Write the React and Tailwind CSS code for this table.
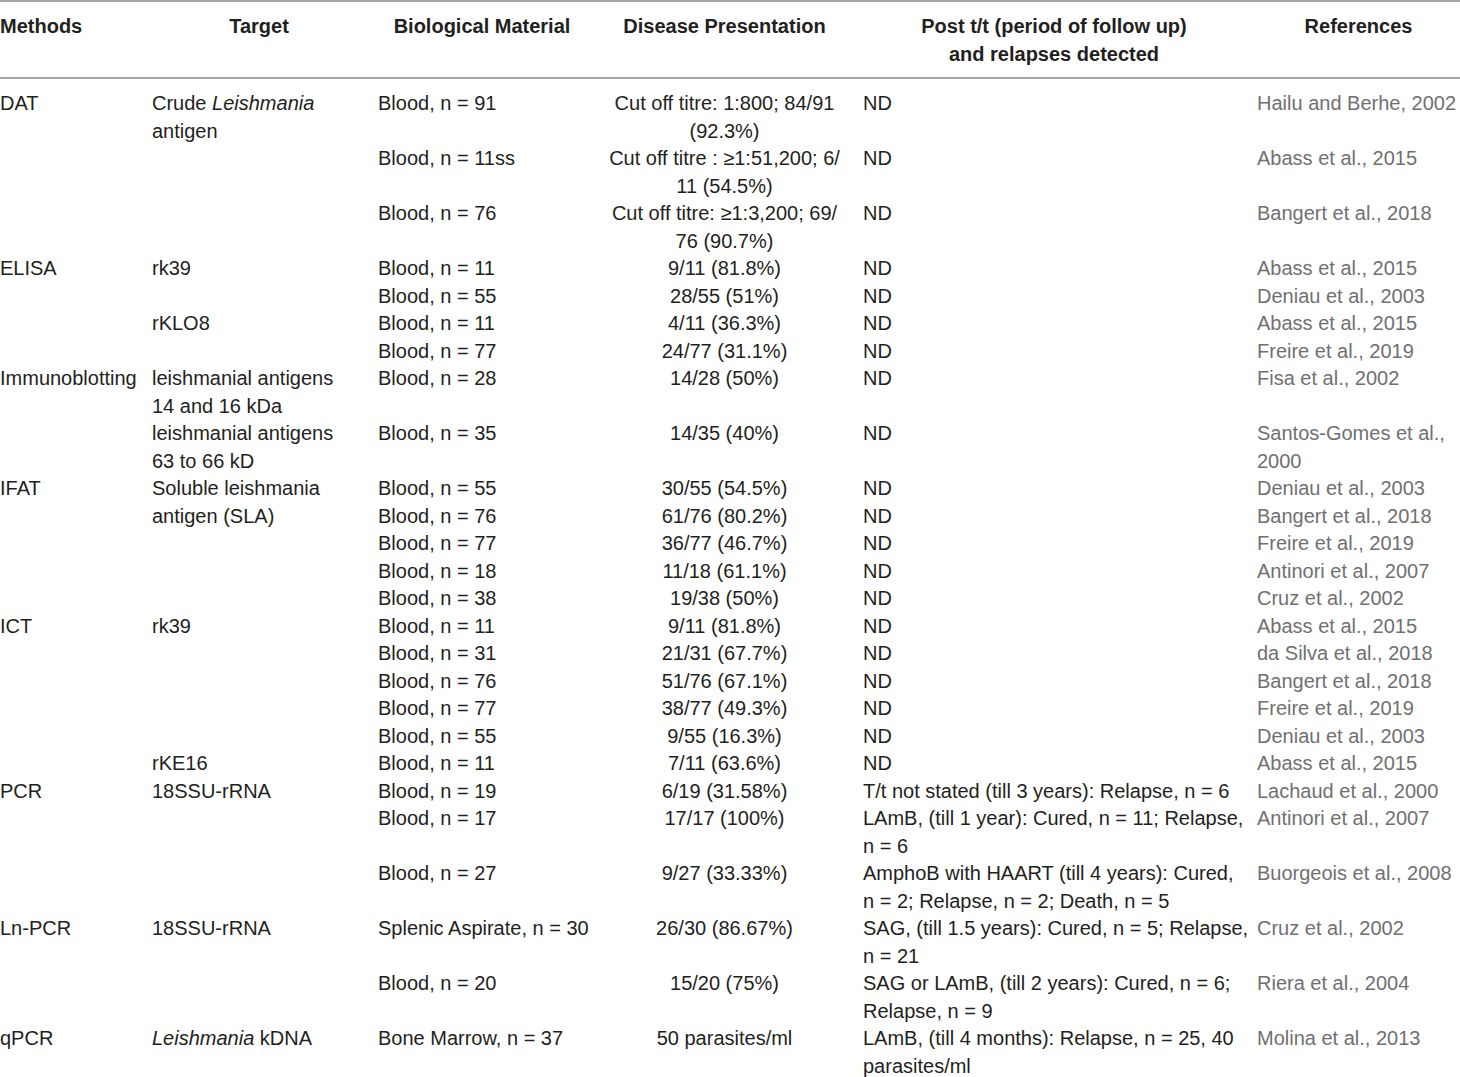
import React from "react";

const I = ({ children }) => <em className="italic">{children}</em>;

// target === null means the cell is covered by a rowSpan above
const rows = [
  ["DAT", <>Crude <I>Leishmania</I>{"\n"}antigen</>, "Blood, n = 91", "Cut off titre: 1:800; 84/91\n(92.3%)", "ND", "Hailu and Berhe, 2002"],
  ["", "", "Blood, n = 11ss", "Cut off titre : ≥1:51,200; 6/\n11 (54.5%)", "ND", "Abass et al., 2015"],
  ["", "", "Blood, n = 76", "Cut off titre: ≥1:3,200; 69/\n76 (90.7%)", "ND", "Bangert et al., 2018"],
  ["ELISA", "rk39", "Blood, n = 11", "9/11 (81.8%)", "ND", "Abass et al., 2015"],
  ["", "", "Blood, n = 55", "28/55 (51%)", "ND", "Deniau et al., 2003"],
  ["", "rKLO8", "Blood, n = 11", "4/11 (36.3%)", "ND", "Abass et al., 2015"],
  ["", "", "Blood, n = 77", "24/77 (31.1%)", "ND", "Freire et al., 2019"],
  ["Immunoblotting", "leishmanial antigens\n14 and 16 kDa", "Blood, n = 28", "14/28 (50%)", "ND", "Fisa et al., 2002"],
  ["", "leishmanial antigens\n63 to 66 kD", "Blood, n = 35", "14/35 (40%)", "ND", "Santos-Gomes et al.,\n2000"],
  ["IFAT", "Soluble leishmania\nantigen (SLA)", "Blood, n = 55", "30/55 (54.5%)", "ND", "Deniau et al., 2003", 5],
  ["", null, "Blood, n = 76", "61/76 (80.2%)", "ND", "Bangert et al., 2018"],
  ["", null, "Blood, n = 77", "36/77 (46.7%)", "ND", "Freire et al., 2019"],
  ["", null, "Blood, n = 18", "11/18 (61.1%)", "ND", "Antinori et al., 2007"],
  ["", null, "Blood, n = 38", "19/38 (50%)", "ND", "Cruz et al., 2002"],
  ["ICT", "rk39", "Blood, n = 11", "9/11 (81.8%)", "ND", "Abass et al., 2015"],
  ["", "", "Blood, n = 31", "21/31 (67.7%)", "ND", "da Silva et al., 2018"],
  ["", "", "Blood, n = 76", "51/76 (67.1%)", "ND", "Bangert et al., 2018"],
  ["", "", "Blood, n = 77", "38/77 (49.3%)", "ND", "Freire et al., 2019"],
  ["", "", "Blood, n = 55", "9/55 (16.3%)", "ND", "Deniau et al., 2003"],
  ["", "rKE16", "Blood, n = 11", "7/11 (63.6%)", "ND", "Abass et al., 2015"],
  ["PCR", "18SSU-rRNA", "Blood, n = 19", "6/19 (31.58%)", "T/t not stated (till 3 years): Relapse, n = 6", "Lachaud et al., 2000"],
  ["", "", "Blood, n = 17", "17/17 (100%)", "LAmB, (till 1 year): Cured, n = 11; Relapse,\nn = 6", "Antinori et al., 2007"],
  ["", "", "Blood, n = 27", "9/27 (33.33%)", "AmphoB with HAART (till 4 years): Cured,\nn = 2; Relapse, n = 2; Death, n = 5", "Buorgeois et al., 2008"],
  ["Ln-PCR", "18SSU-rRNA", "Splenic Aspirate, n = 30", "26/30 (86.67%)", "SAG, (till 1.5 years): Cured, n = 5; Relapse,\nn = 21", "Cruz et al., 2002"],
  ["", "", "Blood, n = 20", "15/20 (75%)", "SAG or LAmB, (till 2 years): Cured, n = 6;\nRelapse, n = 9", "Riera et al., 2004"],
  ["qPCR", <><I>Leishmania</I> kDNA</>, "Bone Marrow, n = 37", "50 parasites/ml", "LAmB, (till 4 months): Relapse, n = 25, 40\nparasites/ml", "Molina et al., 2013"],
];

const headers = [
  "Methods",
  "Target",
  "Biological Material",
  "Disease Presentation",
  "Post t/t (period of follow up)\nand relapses detected",
  "References",
];

export default function App() {
  return (
    <div className="w-[1460px] bg-white text-[#231f20] font-['Liberation_Sans',Arial,sans-serif] text-[20px] leading-[27.5px]">
      <table className="w-[1460px] table-fixed border-collapse">
        <colgroup>
          <col className="w-[152px]" />
          <col className="w-[226px]" />
          <col className="w-[220px]" />
          <col className="w-[265px]" />
          <col className="w-[394px]" />
          <col className="w-[203px]" />
        </colgroup>
        <thead>
          <tr className="border-t-2 border-b-2 border-[#a3a3a3]">
            {headers.map((h, i) => (
              <th
                key={i}
                className={`pt-[11px] pb-[9px] align-top font-bold whitespace-pre ${
                  i === 0 ? "text-left" : "text-center"
                } ${i === 5 ? "" : "pr-[12px]"}`}
              >
                {h}
              </th>
            ))}
          </tr>
        </thead>
        <tbody>
          {rows.map((r, ri) => {
            const last = ri === rows.length - 1;
            const pad = `${ri === 0 ? "pt-[11px]" : ""} ${last ? "pb-[11px]" : ""}`;
            return (
              <tr key={ri} className={last ? "border-b-2 border-[#a3a3a3]" : ""}>
                {r.slice(0, 6).map((c, ci) => {
                  if (c === null) return null;
                  return (
                    <td
                      key={ci}
                      rowSpan={ci === 1 && r[6] ? r[6] : undefined}
                      className={`align-top whitespace-pre ${pad} ${ci === 3 ? "text-center" : "text-left"} ${
                        ci === 5 ? "text-[#707070]" : "pr-[12px]"
                      }`}
                    >
                      {c}
                    </td>
                  );
                })}
              </tr>
            );
          })}
        </tbody>
      </table>
    </div>
  );
}
